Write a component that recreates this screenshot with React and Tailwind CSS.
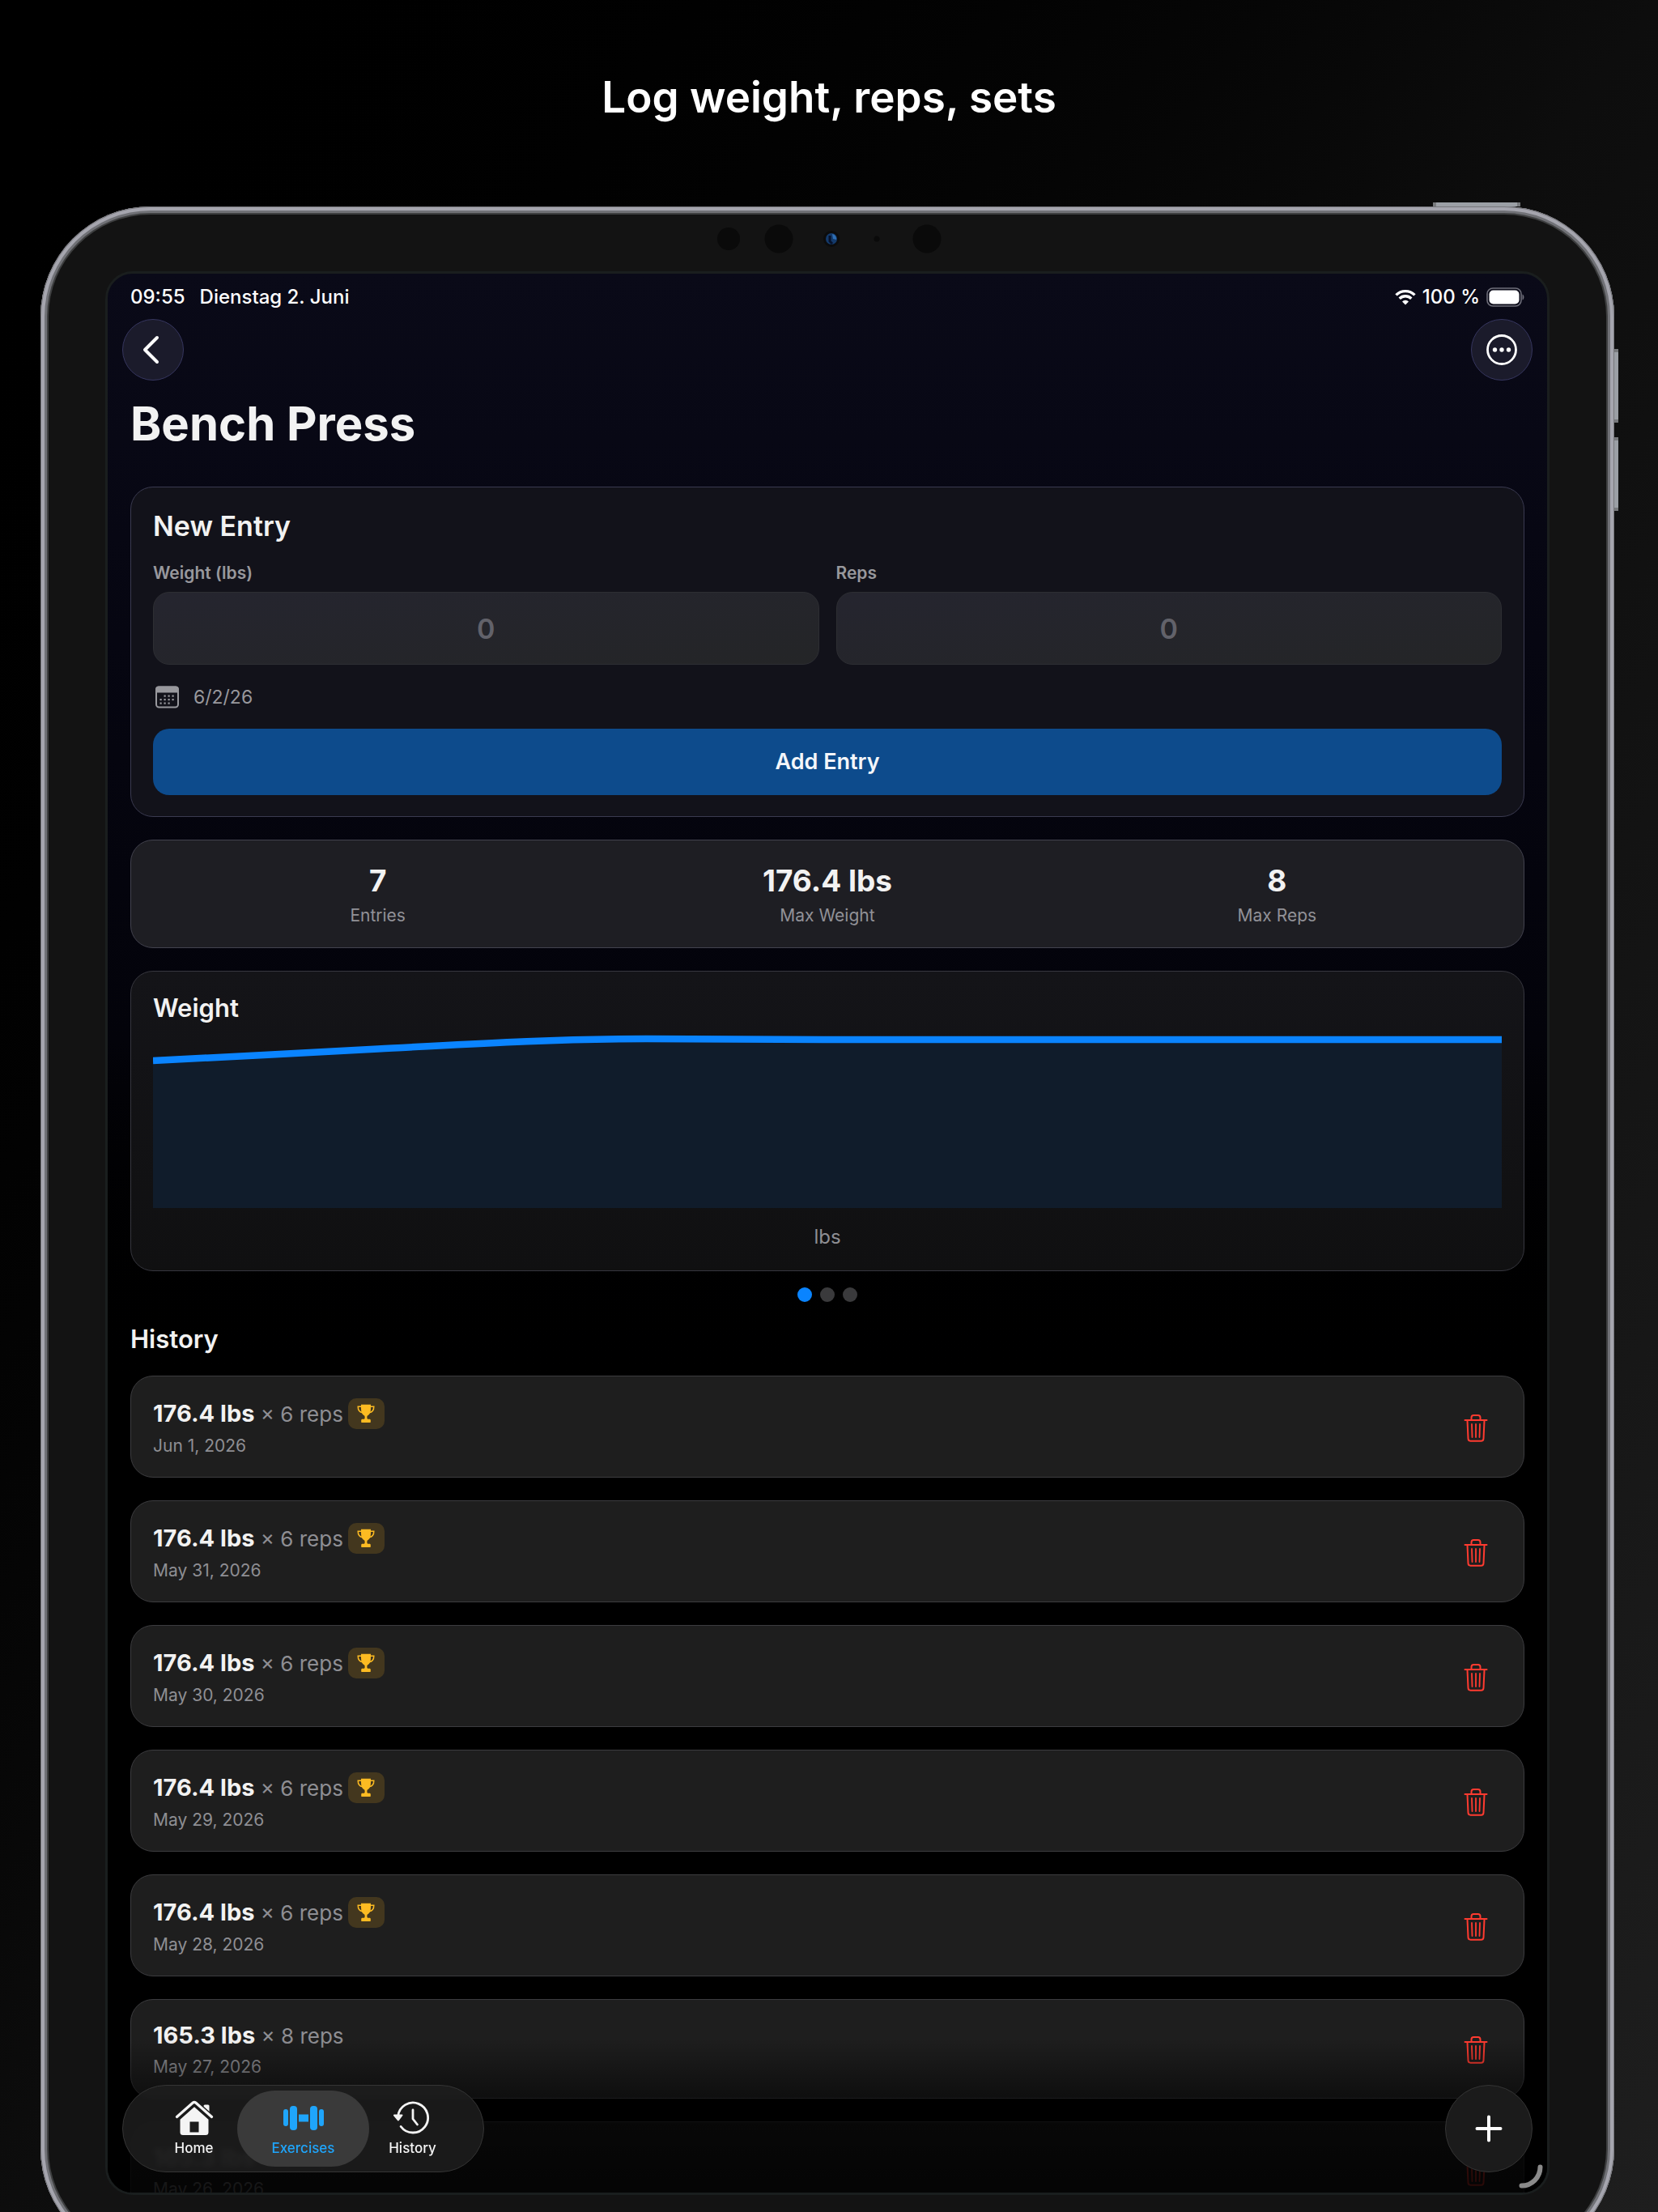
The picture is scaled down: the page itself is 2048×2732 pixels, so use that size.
import { clsx } from 'clsx';

const stats = [
  { value: '7', label: 'Entries' },
  { value: '176.4 lbs', label: 'Max Weight' },
  { value: '8', label: 'Max Reps' },
];

const entries = [
  { weight: '176.4 lbs', reps: 6, date: 'Jun 1, 2026', record: true },
  { weight: '176.4 lbs', reps: 6, date: 'May 31, 2026', record: true },
  { weight: '176.4 lbs', reps: 6, date: 'May 30, 2026', record: true },
  { weight: '176.4 lbs', reps: 6, date: 'May 29, 2026', record: true },
  { weight: '176.4 lbs', reps: 6, date: 'May 28, 2026', record: true },
  { weight: '165.3 lbs', reps: 8, date: 'May 27, 2026', record: false },
  { weight: '165.3 lbs', reps: 8, date: 'May 26, 2026', record: false },
];

function WifiIcon() {
  return (
    <svg width="26" height="20" viewBox="0 0 26 20" fill="none" stroke="white" strokeWidth="3.4">
      <path d="M1.5 7.4a16.3 16.3 0 0 1 23 0" />
      <path d="M5.7 11.8a10.4 10.4 0 0 1 14.6 0" />
      <path d="M13 19.5l-4-4.1a5.8 5.8 0 0 1 8 0z" fill="white" stroke="none" />
    </svg>
  );
}

function BatteryIcon() {
  return (
    <svg width="47" height="24" viewBox="0 0 47 24" fill="none">
      <rect x="1" y="1" width="42" height="22" rx="7" stroke="#6f6f7a" strokeWidth="1.6" />
      <rect x="3.5" y="3.5" width="37" height="17" rx="5" fill="white" />
      <path d="M44.5 8.5c2.600 1 2.600 6 0 7z" fill="#6f6f7a" />
    </svg>
  );
}

function CalendarIcon() {
  const dots = [
    [14, 12.5], [19, 12.5], [24, 12.5],
    [9, 17], [14, 17], [19, 17], [24, 17],
    [9, 21.5], [14, 21.5], [19, 21.5],
  ];
  return (
    <svg width="34" height="30" viewBox="0 0 34 30" fill="none">
      <rect x="4" y="2.5" width="27" height="25" rx="3.5" stroke="#98989d" strokeWidth="2" />
      <path d="M3 9.5V5.5a4 4 0 0 1 4-4h21a4 4 0 0 1 4 4v4z" fill="#98989d" />
      {dots.map(([x, y]) => (
        <rect key={`${x}-${y}`} x={x - 0.5} y={y} width="2.2" height="2.2" fill="#98989d" />
      ))}
    </svg>
  );
}

function TrophyIcon() {
  return (
    <svg width="22" height="24" viewBox="0 0 22 24">
      <path
        d="M5 .8h12v4.900c0 4.300-1.300 7.300-3.700 8.500-.7.400-.9 1-.9 1.900v1.400c0 .7.300 1.100 1 1.200h1.900c1 0 1.500.5 1.500 1.500v1.700c0 .8-.4 1.200-1.200 1.200H6.400c-.8 0-1.200-.4-1.200-1.200v-1.700c0-1 .5-1.500 1.500-1.500h1.900c.7-.1 1-.5 1-1.200v-1.400c0-.9-.2-1.500-.9-1.900C6.300 13 5 10 5 5.700z"
        fill="#fdbb22"
      />
      <path d="M6 3.200H1.200c0 4 2 7 5.800 7.600M16 3.200h4.800c0 4-2 7-5.800 7.600" fill="none" stroke="#fdbb22" strokeWidth="1.500" />
    </svg>
  );
}

function TrashIcon() {
  return (
    <svg width="30" height="36" viewBox="0 0 30 36" fill="none" stroke="#ff3b30" strokeWidth="2" strokeLinecap="round" strokeLinejoin="round">
      <path d="M1.500 8h27" />
      <path d="M9.500 7.500V4.800A2.800 2.800 0 0 1 12.300 2h5.400a2.800 2.800 0 0 1 2.800 2.800v2.700" />
      <path d="M4.500 8.500l1 22.300a3 3 0 0 0 3 2.900h13a3 3 0 0 0 3-2.900l1-22.300" />
      <path d="M10 13l.5 16M15 13v16M20 13l-.5 16" strokeWidth="1.800" />
    </svg>
  );
}

function HomeIcon() {
  return (
    <svg width="48" height="44" viewBox="0 0 48 44">
      <path d="M37 5.500h4a1.500 1.500 0 0 1 1.500 1.500v10l-7-6V7A1.500 1.500 0 0 1 37 5.500z" fill="currentColor" />
      <path d="M2.500 20.500L22 3.200a3 3 0 0 1 4 0l19.500 17.300" fill="none" stroke="#1b1b1b" strokeWidth="6" />
      <path d="M2.500 20.500L22 3.200a3 3 0 0 1 4 0l19.500 17.300" fill="none" stroke="currentColor" strokeWidth="3.200" strokeLinecap="round" />
      <path
        d="M24 8.300l17.500 15.500v15.700a3.500 3.500 0 0 1-3.500 3.500H10a3.500 3.500 0 0 1-3.500-3.500V23.800zM18.500 26.500v13h11v-13z"
        fill="currentColor"
        fillRule="evenodd"
      />
    </svg>
  );
}

function DumbbellIcon() {
  return (
    <svg width="52" height="44" viewBox="0 0 52 44" fill="currentColor">
      <rect x="1" y="11" width="6" height="21" rx="3" />
      <rect x="9" y="7" width="9" height="30" rx="4" />
      <rect x="20" y="17.500" width="12" height="9" />
      <rect x="34" y="7" width="9" height="30" rx="4" />
      <rect x="45" y="11" width="6" height="21" rx="3" />
    </svg>
  );
}

function HistoryIcon() {
  return (
    <svg width="48" height="44" viewBox="0 0 48 44" fill="none" stroke="currentColor" strokeLinecap="round" strokeLinejoin="round">
      <path d="M5.700 19.500A18.500 18.500 0 1 1 9.200 32.500" strokeWidth="2.800" />
      <path d="M1 18.500h9.500L6 24.500z" fill="currentColor" strokeWidth="2" />
      <path d="M24 12v11l5.500 7" strokeWidth="2.800" />
    </svg>
  );
}

function Cameras() {
  return (
    <svg className="mx-auto block" width="286" height="36" viewBox="-5 0 286 36">
      <circle cx="16" cy="18" r="14" fill="#0a0a0a" />
      <circle cx="78" cy="18" r="17.500" fill="#0a0a0a" />
      <circle cx="143" cy="18" r="10" fill="#0c0c0c" />
      <circle cx="143" cy="18" r="7" fill="#143a6b" />
      <path d="M144 12a6 6 0 0 1 5 7l-4-1z" fill="#2f6fb4" />
      <path d="M141 14v7l3 3" fill="none" stroke="#07122a" strokeWidth="3" />
      <circle cx="199" cy="18" r="3.500" fill="#0a0a0a" />
      <circle cx="261" cy="18" r="17.500" fill="#0a0a0a" />
    </svg>
  );
}

function StatusBar() {
  return (
    <div className="mt-[13px] flex h-8 items-center justify-between text-[24px] font-medium leading-8 text-white">
      <div className="flex gap-[18px]">
        <span>09:55</span>
        <span>Dienstag 2. Juni</span>
      </div>
      <div className="flex items-center gap-2">
        <WifiIcon />
        <span>100 %</span>
        <BatteryIcon />
      </div>
    </div>
  );
}

function NavBar() {
  const round = 'flex size-[76px] items-center justify-center rounded-full border border-[#36365f] bg-[#1b1b2b]';
  return (
    <div className="-mx-[10px] mt-[11px] flex justify-between">
      <button className={round} aria-label="Back">
        <svg width="36" height="36" viewBox="0 0 36 36" fill="none" stroke="white" strokeWidth="4" strokeLinecap="round" strokeLinejoin="round">
          <path d="M23 3L8 18l15 15" />
        </svg>
      </button>
      <button className={round} aria-label="More">
        <svg width="40" height="40" viewBox="0 0 40 40" fill="white">
          <circle cx="20" cy="20" r="17.500" fill="none" stroke="white" strokeWidth="2.800" />
          <circle cx="11.500" cy="20" r="2.700" />
          <circle cx="20" cy="20" r="2.700" />
          <circle cx="28.500" cy="20" r="2.700" />
        </svg>
      </button>
    </div>
  );
}

function NumberField({ id, label }) {
  return (
    <div className="flex-1">
      <label htmlFor={id} className="block text-[21px] font-semibold leading-7 text-[#98989d]">
        {label}
      </label>
      <input
        id={id}
        placeholder="0"
        className="mt-[9px] block h-[90px] w-full rounded-[20px] border border-[#2d2e33] bg-linear-to-br from-[#25252f] to-[#242527] text-center text-[34px] font-semibold text-white placeholder:text-[#62626a]"
      />
    </div>
  );
}

function NewEntry() {
  return (
    <section className="mt-[46px] rounded-[28px] border border-[#3a3a50] bg-[#12121a] px-[27px] pt-7 pb-[26px]">
      <h2 className="text-[34px] font-semibold leading-10 text-[#f2f2f2]">New Entry</h2>
      <div className="mt-6 flex gap-[21px]">
        <NumberField id="weight" label="Weight (lbs)" />
        <NumberField id="reps" label="Reps" />
      </div>
      <button className="mt-6 flex h-8 items-center gap-4 text-[23px] leading-8 text-[#98989d]">
        <CalendarIcon />
        6/2/26
      </button>
      <button className="mt-[23px] block h-[82px] w-full rounded-[20px] bg-[#0d4b8c] text-[27px] font-semibold text-[#f4f6fa]">
        Add Entry
      </button>
    </section>
  );
}

function Stats() {
  return (
    <section className="mt-7 grid grid-cols-3 rounded-[28px] border border-[#42424e] bg-[#1e1e23] px-[27px] pt-[30px] pb-[25px] text-center">
      {stats.map((stat) => (
        <div key={stat.label}>
          <p className="text-[37px] font-bold leading-10 text-[#f2f2f2]">{stat.value}</p>
          <p className="mt-[9px] text-[21px] leading-7 text-[#919197]">{stat.label}</p>
        </div>
      ))}
    </section>
  );
}

function WeightChart() {
  const line = 'M0 35C93 30 185 26 278 20.5C370 16 470 8.5 610 8C680 8 750 9 833 9H1668';
  return (
    <section className="mt-7 rounded-[28px] border border-[#37373f] bg-linear-to-b from-[#141418] to-[#101011] px-[27px] pt-[25px] pb-[25px]">
      <h2 className="text-[31px] font-semibold leading-10 text-[#f2f2f2]">Weight</h2>
      <svg className="mt-[10px] block h-[217px] w-full" viewBox="0 0 1668 217" preserveAspectRatio="none">
        <path d={`${line}V217H0z`} fill="#101c2b" />
        <path d={line} fill="none" stroke="#0a84ff" strokeWidth="8.5" />
      </svg>
      <p className="mt-5 text-center text-[24px] leading-8 text-[#8e8e93]">lbs</p>
    </section>
  );
}

function HistoryRow({ entry }) {
  return (
    <li className="flex items-center justify-between rounded-[28px] border border-[#3c3c3f] bg-[#1e1e1e] pt-[27px] pr-[44px] pb-6 pl-[27px]">
      <div>
        <div className="flex items-center">
          <p className="text-[26px] leading-[34px] text-[#8e8e93]">
            <span className="text-[29px] font-bold text-[#f2f2f2]">{entry.weight}</span> × {entry.reps} reps
          </p>
          {entry.record && (
            <span className="ml-[6px] flex h-[38px] w-[45px] items-center justify-center rounded-[10px] bg-[#43371e]">
              <TrophyIcon />
            </span>
          )}
        </div>
        <p className="mt-[7px] text-[21px] leading-7 text-[#8e8e93]">{entry.date}</p>
      </div>
      <button aria-label={`Delete ${entry.date}`}>
        <TrashIcon />
      </button>
    </li>
  );
}

function Tab({ icon, label, active }) {
  return (
    <a href="#" className={clsx('relative block w-[135px] pt-3', active ? 'text-[#1fa5fb]' : 'text-[#f4f4f4]')}>
      {active && <span className="absolute -inset-x-[14px] top-0 bottom-0 rounded-full bg-[#3a3a3a]" />}
      <span className="relative flex flex-col items-center text-[17px] font-medium leading-6">
        {icon}
        <span className="mt-[3px]">{label}</span>
      </span>
    </a>
  );
}

function TabBar() {
  return (
    <nav className="absolute bottom-[25px] left-[18px] flex h-[108px] rounded-full border border-[#353535] bg-[#1f1f1f]/80 px-5 py-[6px] backdrop-blur-[3px]">
      <Tab icon={<HomeIcon />} label="Home" />
      <Tab icon={<DumbbellIcon />} label="Exercises" active />
      <Tab icon={<HistoryIcon />} label="History" />
    </nav>
  );
}

export default function App() {
  return (
    <div className="flex h-screen flex-col overflow-hidden bg-linear-to-br from-black via-[#0d0d0d] to-[#1e1e1e] font-['Inter',sans-serif]">
      <h1 className="pt-[88px] text-center text-[53px] font-semibold leading-16 text-white">Log weight, reps, sets</h1>

      <div className="relative mt-[103px] mr-[54px] -mb-[58px] ml-[50px] flex min-h-0 flex-1 flex-col rounded-[136px] bg-[#131313] px-[80px] pb-[79px] shadow-[inset_0_0_0_1px_#77777c,inset_0_0_0_5px_#a5a5ae,inset_0_0_0_8px_#707176,inset_0_0_0_10px_#3e3f40]">
        <span className="absolute -top-[5px] right-[116px] h-[5px] w-[108px] border-x-4 border-[#77797c] bg-[#9b9fa5]" />
        <span className="absolute top-[176px] -right-[5px] h-[91px] w-[5px] border-y-4 border-[#77797c] bg-[#9b9fa5]" />
        <span className="absolute top-[285px] -right-[5px] h-[91px] w-[5px] border-y-4 border-[#77797c] bg-[#9b9fa5]" />

        <div className="pt-[22px] pb-[22px]">
          <Cameras />
        </div>

        <div className="relative flex min-h-0 flex-1 flex-col overflow-hidden rounded-[34px] border-3 border-[#1a1e1e] bg-linear-to-b from-[#0a0a18] via-[#03030a] via-40% to-black to-60%">
          <main className="px-7">
            <StatusBar />
            <NavBar />
            <h1 className="mt-[21px] text-[58px] font-bold leading-16 text-[#f2f2f2]">Bench Press</h1>
            <NewEntry />
            <Stats />
            <WeightChart />
            <div className="mt-5 flex justify-center gap-[10px]">
              <span className="size-[18px] rounded-full bg-[#0a84ff]" />
              <span className="size-[18px] rounded-full bg-[#3a3a3c]" />
              <span className="size-[18px] rounded-full bg-[#3a3a3c]" />
            </div>
            <h2 className="mt-[26px] text-[31px] font-semibold leading-10 text-[#f2f2f2]">History</h2>
            <ul className="mt-[25px] flex flex-col gap-7">
              {entries.map((entry) => (
                <HistoryRow key={entry.date} entry={entry} />
              ))}
            </ul>
          </main>

          {/* fade under the floating controls */}
          <div className="pointer-events-none absolute inset-x-0 bottom-0 h-[190px] bg-linear-to-b from-transparent via-black/75 via-55% to-black/85" />

          <TabBar />
          <button
            aria-label="Add"
            className="absolute right-[18px] bottom-[25px] flex size-[108px] items-center justify-center rounded-full border border-[#353535] bg-[#1c1c1c]/95 backdrop-blur-xs"
          >
            <svg width="36" height="36" viewBox="0 0 36 36" stroke="white" strokeWidth="4" strokeLinecap="round">
              <path d="M18 3.500v29M3.500 18h29" />
            </svg>
          </button>
          <svg className="absolute right-[5px] bottom-[5px]" width="30" height="30" viewBox="0 0 30 30" fill="none">
            <path d="M3.500 26.500A23 23 0 0 0 26.500 3.500" stroke="#8a8a8a" strokeWidth="6" strokeLinecap="round" />
          </svg>
        </div>
      </div>
    </div>
  );
}
